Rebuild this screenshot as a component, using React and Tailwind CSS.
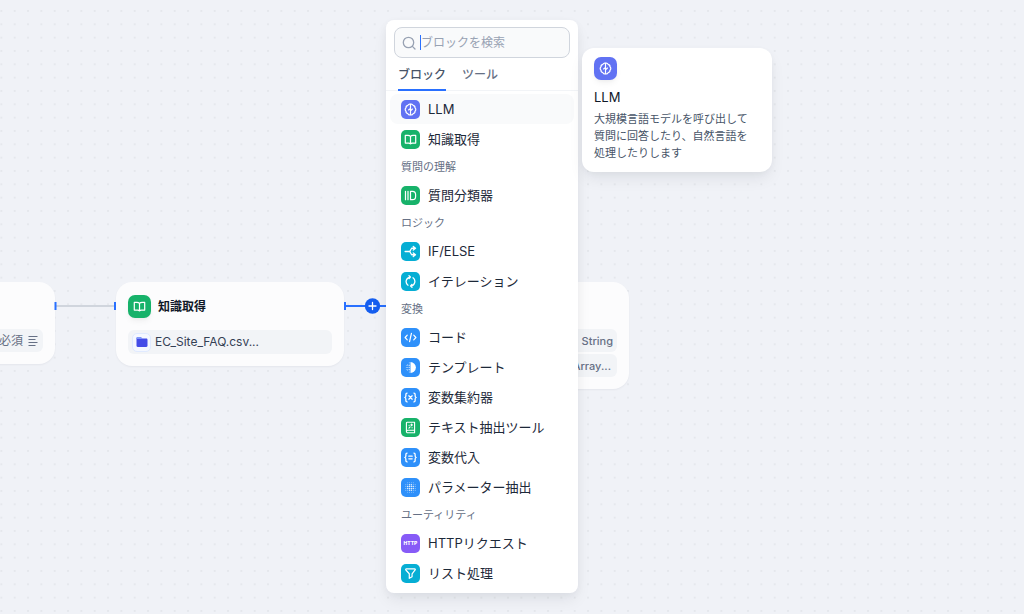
import React from "react";

const line = {
  fill: "none",
  stroke: "currentColor",
  strokeWidth: 1.3,
  strokeLinecap: "round",
  strokeLinejoin: "round",
};

const HALFTONE_LEFT = [
  [5.6, 3.2, 0.5], [5.6, 5, 0.6], [5.6, 7, 0.6], [5.6, 9, 0.6], [5.6, 10.8, 0.5],
  [4, 3.6, 0.45], [4, 5, 0.5], [4, 7, 0.5], [4, 9, 0.5], [4, 10.4, 0.45],
  [2.4, 5, 0.4], [2.4, 7, 0.45], [2.4, 9, 0.4], [5.6, 1.6, 0.4], [5.6, 12.4, 0.4],
];

const GRID_DOTS = [-5, -3, -1, 1, 3, 5].flatMap((x) =>
  [-5, -3, -1, 1, 3, 5]
    .filter((y) => x * x + y * y < 36)
    .map((y) => [7 + x, 7 + y, x * x + y * y < 12 ? 0.8 : 0.5])
);

const BRACES =
  "M3.3 2.2C2.2 2.2 2 2.7 2 3.700v1.500C2 6.300 1.600 6.800.9 7c.7.2 1.100.7 1.100 1.800v1.500c0 1 .2 1.500 1.300 1.500M10.700 2.200c1.100 0 1.300.5 1.300 1.500v1.500c0 1.100.4 1.600 1.100 1.800-.7.2-1.100.7-1.100 1.800v1.500c0 1-.2 1.500-1.300 1.500";

const glyphs = {
  llm: (
    <g {...line}>
      <path d="M7 1.3C5.900 1 4.700 1.500 4.200 2.500 2.900 2.800 2 3.900 2.200 5.200 1 6.200 1 7.800 2.200 8.800 2 10.100 2.900 11.200 4.200 11.500 4.700 12.500 5.900 13 7 12.700 8.100 13 9.300 12.500 9.800 11.500 11.100 11.200 12 10.100 11.800 8.800 13 7.800 13 6.200 11.800 5.200 12 3.900 11.100 2.800 9.800 2.500 9.300 1.500 8.100 1 7 1.300z" />
      <path d="M7 1.500v11M7 6 4.900 7.500M7 8.500 9.100 6.500" />
    </g>
  ),
  book: (
    <g {...line}>
      <path d="M7 3.600C6.300 2.800 5.400 2.500 4.200 2.500H1.400v8.400H5c.9 0 1.600.2 2 .8.4-.6 1.100-.8 2-.8h3.600V2.500H9.800C8.600 2.500 7.700 2.800 7 3.600zM7 3.600v8" />
    </g>
  ),
  classifier: (
    <g {...line}>
      <path d="M1.600 2.500v9M4.300 2.500v9M7 2.500h2.200c2 0 3.300 1.500 3.300 3.500v2c0 2-1.300 3.500-3.300 3.500H7z" />
    </g>
  ),
  branch: (
    <g {...line} strokeWidth="1.4">
      <path d="M1.200 7h5M6.200 7 8.200 3.500h3.600M6.200 7l2 3.500h3.600M10 1.600l2.400 1.900L10 5.400M10 8.600l2.400 1.900-2.400 1.900" />
    </g>
  ),
  loop: (
    <g {...line} strokeWidth="1.4">
      <path d="M4.300 11A4.900 4.900 0 0 1 6.600 2.200M5.400.8 6.900 2.200 5.500 3.700" />
      <path d="M9.700 3A4.900 4.900 0 0 1 7.400 11.800M8.600 13.200 7.100 11.800 8.500 10.300" />
    </g>
  ),
  code: (
    <g {...line}>
      <path d="M3.500 4.500 1.200 7l2.300 2.500M10.500 4.500 12.800 7l-2.300 2.500M8 2.500l-2 9" />
    </g>
  ),
  template: (
    <g fill="currentColor">
      <path d="M7 1.200a5.800 5.800 0 0 1 0 11.600z" />
      {HALFTONE_LEFT.map(([x, y, r]) => (
        <circle key={x + "-" + y} cx={x} cy={y} r={r} />
      ))}
    </g>
  ),
  variable: (
    <g {...line} strokeWidth="1.4">
      <path d={BRACES} />
      <path d="M5.200 5.200l3.600 3.600M8.800 5.200 5.200 8.800" />
    </g>
  ),
  assign: (
    <g {...line} strokeWidth="1.4">
      <path d={BRACES} />
      <path d="M5.200 5.600h3.600M5.200 8.400h3.600" />
    </g>
  ),
  extractor: (
    <g {...line} strokeWidth="1.2">
      <path d="M2.600 11V2.300c0-.6.4-1 1-1h7.800v11.400H4c-.8 0-1.400-.6-1.400-1.400s.6-1.400 1.400-1.400h7.400" />
      <path d="M5.300 7.600l1.300-1.300M8.200 3.400v1.600M7.400 4.200H9M5.400 4.600h.2M8.600 7.200h.2" />
    </g>
  ),
  parameter: (
    <g fill="currentColor" opacity="0.85">
      {GRID_DOTS.map(([x, y, r]) => (
        <circle key={x + "-" + y} cx={x} cy={y} r={r} />
      ))}
    </g>
  ),
  filter: (
    <g {...line}>
      <path d="M2.500 2h9c.6 0 .9.7.5 1.200L8.700 7.300v3.200l-3 1.700V7.300L2 3.200C1.600 2.700 1.900 2 2.500 2z" />
    </g>
  ),
};

function Glyph({ name, className }) {
  return (
    <svg viewBox="0 0 14 14" className={className} aria-hidden="true">
      {glyphs[name]}
    </svg>
  );
}

function BlockIcon({ name, color }) {
  return (
    <span className={"flex size-[19px] shrink-0 items-center justify-center rounded-[5px] text-white " + color}>
      {name === "http" ? (
        <span aria-hidden="true" className="text-[5px] leading-none font-extrabold">HTTP</span>
      ) : (
        <Glyph name={name} className="size-[13px]" />
      )}
    </span>
  );
}

const GREEN = "bg-[#17b26a]";
const CYAN = "bg-[#06aed4]";
const BLUE = "bg-[#2e90fa]";

const groups = [
  {
    items: [
      { label: "LLM", icon: "llm", color: "bg-[#6172f3]", active: true },
      { label: "知識取得", icon: "book", color: GREEN },
    ],
  },
  { title: "質問の理解", items: [{ label: "質問分類器", icon: "classifier", color: GREEN }] },
  {
    title: "ロジック",
    items: [
      { label: "IF/ELSE", icon: "branch", color: CYAN },
      { label: "イテレーション", icon: "loop", color: CYAN },
    ],
  },
  {
    title: "変換",
    items: [
      { label: "コード", icon: "code", color: BLUE },
      { label: "テンプレート", icon: "template", color: BLUE },
      { label: "変数集約器", icon: "variable", color: BLUE },
      { label: "テキスト抽出ツール", icon: "extractor", color: GREEN },
      { label: "変数代入", icon: "assign", color: BLUE },
      { label: "パラメーター抽出", icon: "parameter", color: BLUE },
    ],
  },
  {
    title: "ユーティリティ",
    items: [
      { label: "HTTPリクエスト", icon: "http", color: "bg-[#875bf7]" },
      { label: "リスト処理", icon: "filter", color: CYAN },
    ],
  },
];

function BlockMenu() {
  return (
    <section
      aria-label="ブロック"
      className="absolute top-5 left-[386px] w-48 rounded-lg bg-white pb-[5px] shadow-[0_8px_16px_-2px_rgba(16,24,40,0.08),0_2px_8px_rgba(16,24,40,0.04)]"
    >
      <div className="px-2 pt-[7px]">
        <label className="flex h-[31px] items-center rounded-lg border border-[#d0d5dd] bg-[#f9fafb] px-[7px]">
          <svg viewBox="0 0 14 14" className="mr-1 size-[14px] shrink-0 text-[#98a2b3]" aria-hidden="true">
            <g {...line}>
              <circle cx="6.5" cy="6.5" r="5.2" />
              <path d="m10.400 10.400 2.600 2.600" />
            </g>
          </svg>
          <span className="h-[15px] w-px shrink-0 bg-[#2970ff]" />
          <input
            type="text"
            aria-label="ブロックを検索"
            placeholder="ブロックを検索"
            className="w-full min-w-0 bg-transparent text-[12px] leading-4 text-[#344054] outline-none placeholder:text-[#98a2b3]"
          />
        </label>
      </div>
      <div role="tablist" className="flex h-[33px] gap-4 border-b border-[#f2f4f7] px-3 text-[12px] leading-4 font-medium">
        <button type="button" role="tab" aria-selected="true" className="-mb-px border-b-2 border-[#2970ff] pt-0.5 text-[#475467]">
          ブロック
        </button>
        <button type="button" role="tab" aria-selected="false" className="-mb-px border-b-2 border-transparent pt-0.5 text-[#667085]">
          ツール
        </button>
      </div>
      <div className="px-1 pt-[3px]">
        {groups.map((group, i) => (
          <div key={i}>
            {group.title && (
              <h3 className="px-[11px] py-[5px] text-[11px] leading-4 text-[#667085]">{group.title}</h3>
            )}
            {group.items.map((item) => (
              <button
                key={item.label}
                type="button"
                className={
                  "flex h-[30px] w-full items-center gap-2 rounded-lg px-[11px] text-left text-[13px] leading-5 whitespace-nowrap text-[#1d2939] " +
                  (item.active ? "bg-[#f9fafb]" : "")
                }
              >
                <BlockIcon name={item.icon} color={item.color} />
                {item.label}
              </button>
            ))}
          </div>
        ))}
      </div>
    </section>
  );
}

function BlockTooltip() {
  return (
    <aside
      role="tooltip"
      className="absolute top-12 left-[582px] w-[190px] rounded-xl bg-white px-3 pt-[9px] pb-[10px] shadow-[0_8px_16px_-2px_rgba(16,24,40,0.08),0_2px_6px_rgba(16,24,40,0.03)]"
    >
      <span className="flex size-[23px] items-center justify-center rounded-[7px] bg-[#6172f3] text-white shadow-md shadow-black/5">
        <Glyph name="llm" className="size-[13px]" />
      </span>
      <h2 className="mt-2 text-[13px] leading-[18px] text-[#101828]">LLM</h2>
      <p className="mt-[5px] text-[11px] leading-[17px] text-[#475467]">
        大規模言語モデルを呼び出して
        <br />
        質問に回答したり、自然言語を
        <br />
        処理したりします
      </p>
    </aside>
  );
}

const nodeClass = "absolute top-[282px] w-[228px] rounded-2xl bg-[#fcfcfd] px-3 pb-3 shadow-[0_1px_2px_rgba(16,24,40,0.05)]";

function VariableRow({ children }) {
  return (
    <div className="flex h-[23px] items-center justify-end gap-1 rounded-md bg-[#f2f4f7] px-1 text-[11px] leading-4 font-medium text-[#667085]">
      {children}
    </div>
  );
}

function Canvas() {
  return (
    <div className="absolute inset-0">
      <svg className="absolute inset-0 size-full" aria-hidden="true">
        <defs>
          <pattern
            id="dots"
            width="20"
            height="20"
            patternUnits="userSpaceOnUse"
            patternTransform="translate(-5.3 4.3) scale(0.66667)"
          >
            <circle cx="10" cy="10" r="1.5" fill="#e3e5ea" />
          </pattern>
        </defs>
        <rect width="100%" height="100%" fill="url(#dots)" />
      </svg>

      <article className={nodeClass + " left-[-173px] pt-[47px]"}>
        <VariableRow>
          <span className="text-[12px] font-normal">必須</span>
          <svg viewBox="0 0 12 12" className="size-3" aria-hidden="true">
            <path d="M1.500 1.500h9M1.500 4.500h7M1.500 7.500h9M1.500 10.500h7" fill="none" stroke="#667085" strokeWidth="1.1" />
          </svg>
        </VariableRow>
      </article>

      <article className={nodeClass + " left-[116px] pt-[13px]"}>
        <header className="flex items-center gap-[7px]">
          <span className="flex size-[23px] items-center justify-center rounded-[7px] bg-[#17b26a] text-white shadow-md shadow-black/5">
            <Glyph name="book" className="size-[13px]" />
          </span>
          <h2 className="text-[12px] leading-4 font-bold text-[#101828]">知識取得</h2>
        </header>
        <div className="mt-3 flex h-6 items-center gap-1 rounded-md bg-[#f2f4f7] px-1 text-[12px] leading-4 text-[#344054]">
          <span className="flex size-[19px] items-center justify-center rounded-[5px] border border-[#e0eaff] bg-[#f5f8ff]">
            <svg viewBox="0 0 12 12" className="size-3" aria-hidden="true">
              <path d="M.5 2.300C.5 1.600 1 1 1.700 1h3l1.500 1.600h4.100c.7 0 1.200.5 1.200 1.200v6c0 .7-.5 1.200-1.200 1.200H1.700C1 11 .5 10.500.5 9.800z" fill="#444ce7" />
              <path d="M.5 3V2.300C.5 1.600 1 1 1.700 1h3l1.500 1.600v.4z" fill="#8098f9" />
            </svg>
          </span>
          EC_Site_FAQ.csv...
        </div>
      </article>

      <article className={nodeClass + " left-[401px] flex flex-col gap-0.5 pt-[47px]"}>
        <VariableRow>
          <span>String</span>
        </VariableRow>
        <VariableRow>
          <span className="pr-0.5">Array...</span>
        </VariableRow>
      </article>

      <svg className="absolute inset-0 size-full" aria-hidden="true">
        <path d="M56 306h58" stroke="#d0d5dd" strokeWidth="2" />
        <path d="M346 306h55" stroke="#2970ff" strokeWidth="2" />
        <path d="M55.500 302v8M115 302v8M345 302v8" stroke="#2970ff" strokeWidth="2" />
        <circle cx="372.500" cy="306" r="7.700" fill="#155eef" />
        <path d="M369 306h7M372.500 302.500v7" stroke="#fff" strokeWidth="1.300" strokeLinecap="round" />
      </svg>
    </div>
  );
}

export default function App() {
  return (
    <main className="relative min-h-screen overflow-hidden bg-[#f0f2f7] font-['Inter','Noto_Sans_CJK_JP',sans-serif]" lang="ja">
      <Canvas />
      <BlockMenu />
      <BlockTooltip />
    </main>
  );
}
